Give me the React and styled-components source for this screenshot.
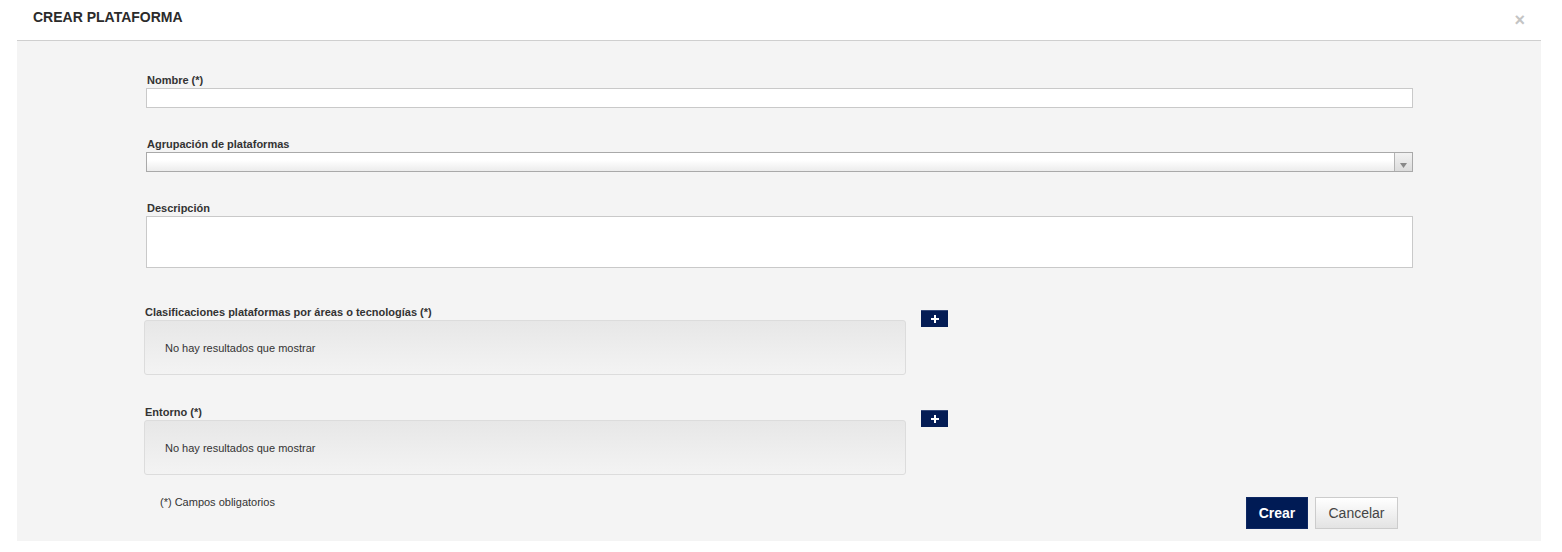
import React from 'react';
import styled, { createGlobalStyle } from 'styled-components';

const GlobalStyle = createGlobalStyle`
  body{
    margin: 0;
    background: #fff;
    font-family: "Liberation Sans", Arial, sans-serif;
    color: #333;
  }
`

const Modal = styled.div`
  width: 1524px;
  margin-left: 17px;
`

const Header = styled.div`
  height: 41px;
  display: flex;
  justify-content: space-between;
  align-items: flex-start;
  padding: 0 16px;
  box-sizing: border-box;
  border-bottom: 1px solid #cfcfcf;

  h4{
    margin: 9px 0 0;
    font-size: 14px;
    line-height: 16px;
    font-weight: 700;
    color: #2b2b2b;
  }
`

const Close = styled.span`
  margin-top: 11px;
  font-size: 18px;
  line-height: 18px;
  font-weight: 700;
  color: #c4c4c4;
  cursor: pointer;
`

const Body = styled.div`
  background: #f4f4f4;
  padding: 32px 0 12px 127px;
`

const Field = styled.div`
  margin-left: 2px;
  margin-bottom: ${p => p.$gap || 29}px;
`

const Label = styled.label`
  display: block;
  font-size: 11px;
  line-height: 14px;
  font-weight: 700;
  color: #333;
  margin: 0 0 1px ${p => p.$shift || 1}px;
`

const Input = styled.input`
  display: block;
  box-sizing: border-box;
  width: 1267px;
  height: 20px;
  margin: 0;
  border: 1px solid #c9c9c9;
  background: #fff;
`

const TextArea = styled.textarea`
  display: block;
  box-sizing: border-box;
  width: 1267px;
  height: 52px;
  margin: 0;
  border: 1px solid #c9c9c9;
  background: #fff;
  resize: none;
`

const Select = styled.div`
  display: flex;
  box-sizing: border-box;
  width: 1267px;
  height: 20px;
  border: 1px solid #a9a9a9;
  background: linear-gradient(to bottom, #ffffff 40%, #ececec);

  .value{
    flex: 1;
  }

  .arrow{
    width: 18px;
    border-left: 1px solid #b3b3b3;
    background: linear-gradient(to bottom, #f2f2f2, #dcdcdc);
    display: flex;
    justify-content: center;
    align-items: flex-end;
    padding-bottom: 3px;
    box-sizing: border-box;
  }
`

const ListRow = styled.div`
  display: flex;
  align-items: flex-start;
  gap: 15px;
  margin-bottom: ${p => p.$gap || 30}px;
`

const ListColumn = styled.div`
  width: 762px;
`

const EmptyBox = styled.div`
  box-sizing: border-box;
  height: 55px;
  border: 1px solid #dcdcdc;
  border-radius: 3px;
  background: linear-gradient(to bottom, #e7e7e7, #f3f3f3);
  display: flex;
  align-items: center;
  padding-left: 20px;
  font-size: 11px;
  color: #333;
`

const AddButton = styled.button`
  margin-top: 5px;
  width: 27px;
  height: 17px;
  padding: 0;
  border: none;
  border-top: 1px solid #35497a;
  background: #041c55;
  display: flex;
  align-items: center;
  justify-content: center;
  cursor: pointer;
`

const Footer = styled.div`
  display: flex;
  justify-content: space-between;
  align-items: flex-start;
  width: 1254px;
`

const Note = styled.div`
  margin: 0 0 0 16px;
  font-size: 11px;
  line-height: 14px;
  color: #333;
`

const Actions = styled.div`
  display: flex;
  gap: 7px;
  margin-top: 2px;
`

const Button = styled.button`
  height: 32px;
  box-sizing: border-box;
  font-family: "Liberation Sans", Arial, sans-serif;
  font-size: 14px;
  padding: 0;
  cursor: pointer;
  ${p => p.$primary ? `
    width: 62px;
    background: #001b55;
    border: 1px solid #0d2762;
    color: #fff;
    font-weight: 700;
  ` : `
    width: 83px;
    background: linear-gradient(to bottom, #ffffff, #e3e3e3);
    border: 1px solid #cccccc;
    color: #444;
  `}
`

const Plus = () => (
  <svg width="10" height="10" viewBox="0 0 10 10">
    <path d="M4 1h2v3h3v2H6v3H4V6H1V4h3z" fill="#fff" />
  </svg>
)

const ListField = ({ label, gap }) => (
  <ListRow $gap={gap}>
    <ListColumn>
      <Label $shift={1}>{label}</Label>
      <EmptyBox>No hay resultados que mostrar</EmptyBox>
    </ListColumn>
    <AddButton><Plus /></AddButton>
  </ListRow>
)

const App = () => {
  return (
    <Modal>
      <GlobalStyle />
      <Header>
        <h4>CREAR PLATAFORMA</h4>
        <Close>×</Close>
      </Header>
      <Body>
        <Field>
          <Label>Nombre (*)</Label>
          <Input type="text" />
        </Field>
        <Field>
          <Label>Agrupación de plataformas</Label>
          <Select>
            <span className="value"></span>
            <span className="arrow">
              <svg width="7" height="5" viewBox="0 0 7 5">
                <path d="M0 0h7L3.5 5z" fill="#888" />
              </svg>
            </span>
          </Select>
        </Field>
        <Field $gap={37}>
          <Label>Descripción</Label>
          <TextArea />
        </Field>
        <ListField label="Clasificaciones plataformas por áreas o tecnologías (*)" />
        <ListField label="Entorno (*)" gap={20} />
        <Footer>
          <Note>(*) Campos obligatorios</Note>
          <Actions>
            <Button $primary>Crear</Button>
            <Button>Cancelar</Button>
          </Actions>
        </Footer>
      </Body>
    </Modal>
  )
}

export default App;
